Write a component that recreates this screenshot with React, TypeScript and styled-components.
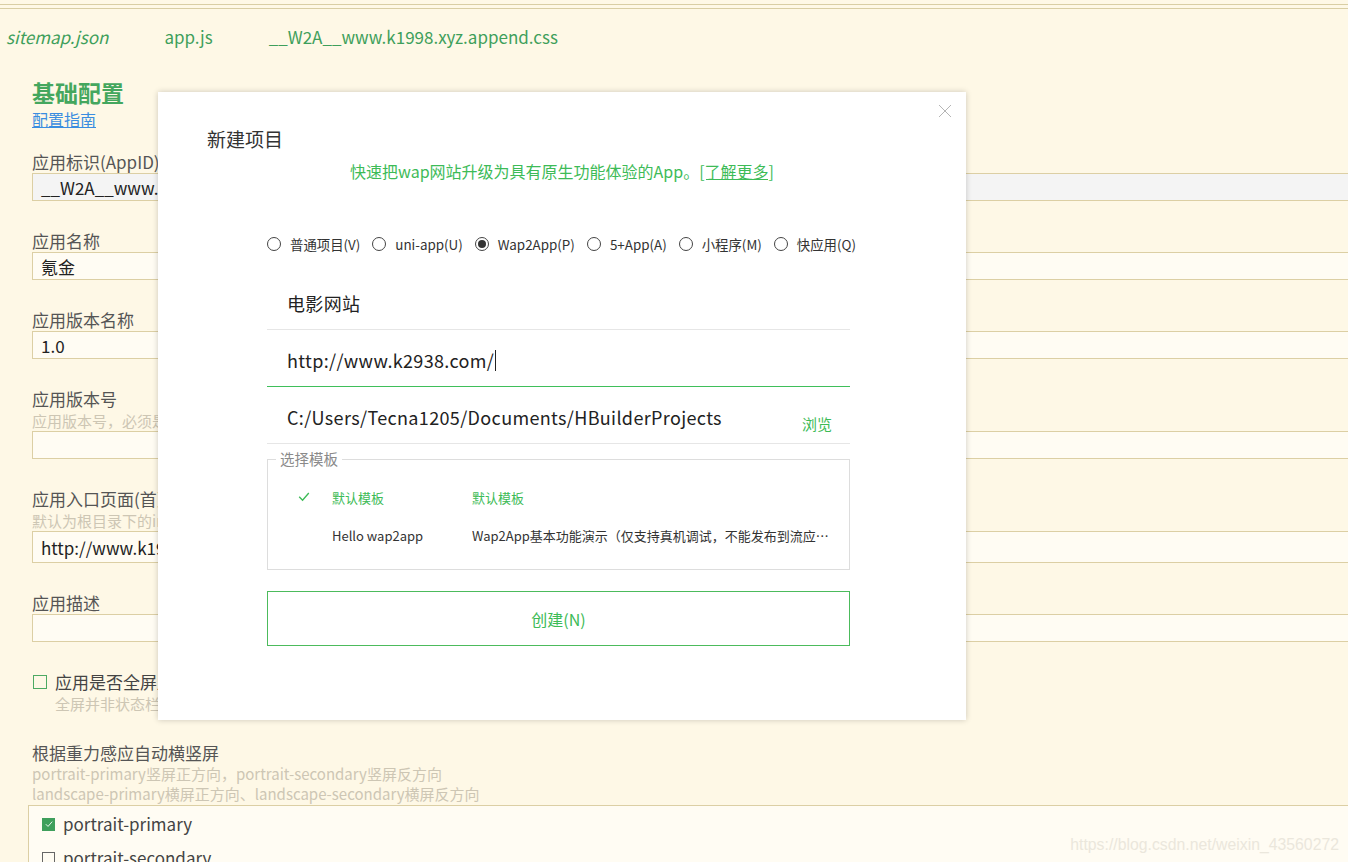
import React from "react";
import styled, { createGlobalStyle, css } from "styled-components";

const GlobalStyle = createGlobalStyle`
  html, body {
    margin: 0;
    padding: 0;
    height: 100%;
    overflow: hidden;
    background: #fef8e6;
  }
  body {
    font-family: "Noto Sans CJK SC", "Noto Sans", sans-serif;
    color: #333;
  }
  * { box-sizing: border-box; }
`;

const Page = styled.div`
  position: relative;
  width: 1348px;
  height: 862px;
  overflow: hidden;
  background: #fef8e6;
`;

const TopRule = styled.div`
  margin-top: 4px;
  height: 5px;
  border-top: 1px solid #d9cea4;
  border-bottom: 1px solid #d9cea4;
`;

const TabBar = styled.div`
  display: flex;
  gap: 56px;
  padding: 16px 0 0 6px;
`;

const Tab = styled.span<{ $italic?: boolean }>`
  font-size: 17px;
  line-height: 24px;
  color: #3e9f5b;
  font-style: ${(p) => (p.$italic ? "italic" : "normal")};
`;

const Form = styled.div`
  display: flex;
  flex-direction: column;
  padding-left: 32px;
`;

const Heading = styled.h1`
  margin: 29px 0 0;
  font-size: 23px;
  line-height: 28px;
  font-weight: 700;
  color: #44a75e;
`;

const GuideLink = styled.a`
  margin-top: 2px;
  font-size: 16px;
  line-height: 22px;
  color: #3a8de0;
  text-decoration: underline;
  align-self: flex-start;
`;

const Field = styled.div<{ $first?: boolean }>`
  display: flex;
  flex-direction: column;
  margin-top: ${(p) => (p.$first ? "21px" : "29px")};
`;

const Label = styled.div`
  font-size: 17px;
  line-height: 22px;
  color: #555;
  white-space: nowrap;
`;

const Hint = styled.div<{ $compact?: boolean }>`
  font-size: 15px;
  line-height: ${(p) => (p.$compact ? "20px" : "21px")};
  color: #cdc6b4;
  white-space: nowrap;
`;

const TextBox = styled.div<{ $disabled?: boolean; $tall?: boolean }>`
  width: calc(100% + 6px);
  height: ${(p) => (p.$tall ? "32px" : "28px")};
  border: 1px solid #dccfa4;
  background: ${(p) => (p.$disabled ? "#f4f4f4" : "#fffcf3")};
  display: flex;
  align-items: center;
  padding-left: 8px;
  font-size: 17px;
  color: #222;
  white-space: nowrap;
`;

const CheckRow = styled.div`
  display: flex;
  align-items: center;
  gap: 8px;
  margin-top: 29px;
  margin-left: 1px;
`;

const Box = styled.span<{ $checked?: boolean; $tone?: "green" | "dark" }>`
  width: 14px;
  height: 14px;
  flex: none;
  display: inline-flex;
  align-items: center;
  justify-content: center;
  border: 1px solid ${(p) => (p.$tone === "dark" ? "#666" : "#4daa63")};
  ${(p) =>
    p.$checked &&
    css`
      background: #3f9f5c;
      border-color: #3f9f5c;
    `}
`;

const CheckLabel = styled.span`
  font-size: 17px;
  line-height: 22px;
  color: #444;
  white-space: nowrap;
`;

const SubHint = styled(Hint)`
  padding-left: 23px;
`;

const OrientBlock = styled.div`
  display: flex;
  flex-direction: column;
  margin-top: 28px;
`;

const OrientBox = styled.div`
  margin-left: -4px;
  margin-top: 1px;
  width: calc(100% + 10px);
  border: 1px solid #dccfa4;
  background: #fffcf3;
  padding: 6px 0 0 13px;
  display: flex;
  flex-direction: column;
  gap: 10px;
  height: 80px;
`;

const OrientRow = styled.div`
  display: flex;
  align-items: center;
  gap: 8px;
  height: 24px;
`;

const SmallBox = styled(Box)`
  width: 13px;
  height: 13px;
`;

/* ---------- modal ---------- */

const Modal = styled.div`
  position: absolute;
  left: 158px;
  top: 92px;
  width: 808px;
  height: 628px;
  background: #fff;
  box-shadow: 0 0 6px rgba(0, 0, 0, 0.2);
  display: flex;
  flex-direction: column;
  padding-top: 34px;
`;

const Close = styled.button`
  position: absolute;
  right: 14px;
  top: 12px;
  width: 14px;
  height: 14px;
  padding: 0;
  border: none;
  background: none;
  display: flex;
`;

const Title = styled.div`
  margin-left: 49px;
  font-size: 19px;
  line-height: 26px;
  color: #333;
`;

const Subtitle = styled.div`
  margin-top: 8px;
  text-align: center;
  font-size: 16px;
  line-height: 22px;
  color: #3dbb57;
`;

const More = styled.span`
  text-decoration: underline;
`;

const Body = styled.div`
  margin-left: 109px;
  width: 583px;
  display: flex;
  flex-direction: column;
`;

const RadioRow = styled.div`
  margin-top: 52px;
  display: flex;
  gap: 12px;
  height: 20px;
  align-items: center;
`;

const RadioItem = styled.label`
  display: flex;
  align-items: center;
  gap: 9px;
  font-size: 13.4px;
  color: #333;
  white-space: nowrap;
`;

const RadioCircle = styled.span<{ $checked?: boolean }>`
  width: 14px;
  height: 14px;
  border-radius: 50%;
  border: 1px solid #444;
  display: inline-flex;
  align-items: center;
  justify-content: center;
  &::after {
    content: "";
    width: 8px;
    height: 8px;
    border-radius: 50%;
    background: ${(p) => (p.$checked ? "#333" : "transparent")};
  }
`;

const InputRow = styled.div<{ $active?: boolean; $first?: boolean }>`
  height: 57px;
  margin-top: ${(p) => (p.$first ? "19px" : "0")};
  display: flex;
  align-items: center;
  padding: 4px 0 0 20px;
  border-bottom: 1px solid ${(p) => (p.$active ? "#3fbf5a" : "#e6e6e6")};
  font-size: 18px;
  letter-spacing: 0.35px;
  color: #222;
  white-space: nowrap;
`;

const Caret = styled.span`
  display: inline-block;
  width: 1px;
  height: 21px;
  background: #222;
  margin-left: 1px;
`;

const Browse = styled.span`
  margin-left: auto;
  margin-right: 18px;
  align-self: flex-end;
  padding-bottom: 9px;
  font-size: 15px;
  letter-spacing: 0;
  color: #3dbb57;
`;

const Templates = styled.fieldset`
  margin: 6px 0 0;
  padding: 10px 0 15px;
  border: 1px solid #dddddd;
  min-width: 0;
`;

const Legend = styled.legend`
  margin-left: 8px;
  padding: 0 4px;
  font-size: 14.5px;
  line-height: 18px;
  color: #8a8a8a;
`;

const TemplateRow = styled.div<{ $selected?: boolean }>`
  height: 38px;
  display: flex;
  align-items: center;
  padding-left: 30px;
  padding-right: 19px;
  font-size: 13px;
  color: ${(p) => (p.$selected ? "#3dbb57" : "#333")};
`;

const CheckCell = styled.span`
  width: 34px;
  flex: none;
  display: flex;
`;

const NameCell = styled.span`
  width: 140px;
  flex: none;
  white-space: nowrap;
`;

const DescCell = styled.span`
  flex: 1;
  min-width: 0;
  white-space: nowrap;
  overflow: hidden;
  text-overflow: ellipsis;
`;

const CreateButton = styled.button`
  margin-top: 21px;
  height: 55px;
  width: 100%;
  border: 1px solid #4cbb5c;
  background: #fff;
  font-family: inherit;
  font-size: 16px;
  color: #3dbb57;
`;

const Watermark = styled.div`
  position: absolute;
  right: 9px;
  bottom: 8px;
  font-family: "Liberation Sans", Arial, sans-serif;
  font-size: 15.8px;
  color: #ebe7dc;
`;

const CheckMark = ({ color = "#fff", size = 9 }: { color?: string; size?: number }) => (
  <svg width={size} height={size * 0.8} viewBox="0 0 12 10" fill="none">
    <polyline points="1,5 4.5,8.5 11,1" stroke={color} strokeWidth="1.4" />
  </svg>
);

const radios = [
  { label: "普通项目(V)" },
  { label: "uni-app(U)" },
  { label: "Wap2App(P)", checked: true },
  { label: "5+App(A)" },
  { label: "小程序(M)" },
  { label: "快应用(Q)" },
];

export default function App() {
  return (
    <Page>
      <GlobalStyle />
      <TopRule />
      <TabBar>
        <Tab $italic>sitemap.json</Tab>
        <Tab>app.js</Tab>
        <Tab>__W2A__www.k1998.xyz.append.css</Tab>
      </TabBar>

      <Form>
        <Heading>基础配置</Heading>
        <GuideLink>配置指南</GuideLink>

        <Field $first>
          <Label>应用标识(AppID)</Label>
          <TextBox $disabled>__W2A__www.k1998.xyz</TextBox>
        </Field>
        <Field>
          <Label>应用名称</Label>
          <TextBox>氪金</TextBox>
        </Field>
        <Field>
          <Label>应用版本名称</Label>
          <TextBox>1.0</TextBox>
        </Field>
        <Field>
          <Label>应用版本号</Label>
          <Hint>应用版本号，必须是整数；Android平台上，对应manifest里的versionCode</Hint>
          <TextBox />
        </Field>
        <Field>
          <Label>应用入口页面(首页)地址</Label>
          <Hint>默认为根目录下的index.html；支持网络地址，必须以http://或https://开头</Hint>
          <TextBox $tall>http://www.k1998.xyz/</TextBox>
        </Field>
        <Field>
          <Label>应用描述</Label>
          <TextBox />
        </Field>

        <CheckRow>
          <Box />
          <CheckLabel>应用是否全屏显示</CheckLabel>
        </CheckRow>
        <SubHint>全屏并非状态栏透明的沉浸式效果</SubHint>

        <OrientBlock>
          <Label>根据重力感应自动横竖屏</Label>
          <Hint $compact>portrait-primary竖屏正方向，portrait-secondary竖屏反方向</Hint>
          <Hint $compact>landscape-primary横屏正方向、landscape-secondary横屏反方向</Hint>
          <OrientBox>
            <OrientRow>
              <SmallBox $checked>
                <CheckMark size={8} />
              </SmallBox>
              <CheckLabel>portrait-primary</CheckLabel>
            </OrientRow>
            <OrientRow>
              <SmallBox $tone="dark" />
              <CheckLabel>portrait-secondary</CheckLabel>
            </OrientRow>
          </OrientBox>
        </OrientBlock>
      </Form>

      <Modal>
        <Close aria-label="close">
          <svg width="14" height="14" viewBox="0 0 14 14">
            <line x1="1" y1="1" x2="13" y2="13" stroke="#b5b5b5" strokeWidth="1" />
            <line x1="13" y1="1" x2="1" y2="13" stroke="#b5b5b5" strokeWidth="1" />
          </svg>
        </Close>
        <Title>新建项目</Title>
        <Subtitle>
          快速把wap网站升级为具有原生功能体验的App。<More>[了解更多]</More>
        </Subtitle>
        <Body>
          <RadioRow>
            {radios.map((r) => (
              <RadioItem key={r.label}>
                <RadioCircle $checked={r.checked} />
                {r.label}
              </RadioItem>
            ))}
          </RadioRow>
          <InputRow $first>电影网站</InputRow>
          <InputRow $active>
            http://www.k2938.com/
            <Caret />
          </InputRow>
          <InputRow>
            C:/Users/Tecna1205/Documents/HBuilderProjects
            <Browse>浏览</Browse>
          </InputRow>
          <Templates>
            <Legend>选择模板</Legend>
            <TemplateRow $selected>
              <CheckCell>
                <CheckMark color="#3dbb57" size={12} />
              </CheckCell>
              <NameCell>默认模板</NameCell>
              <DescCell>默认模板</DescCell>
            </TemplateRow>
            <TemplateRow>
              <CheckCell />
              <NameCell>Hello wap2app</NameCell>
              <DescCell>Wap2App基本功能演示（仅支持真机调试，不能发布到流应用市场）</DescCell>
            </TemplateRow>
          </Templates>
          <CreateButton>创建(N)</CreateButton>
        </Body>
      </Modal>

      <Watermark>https://blog.csdn.net/weixin_43560272</Watermark>
    </Page>
  );
}
